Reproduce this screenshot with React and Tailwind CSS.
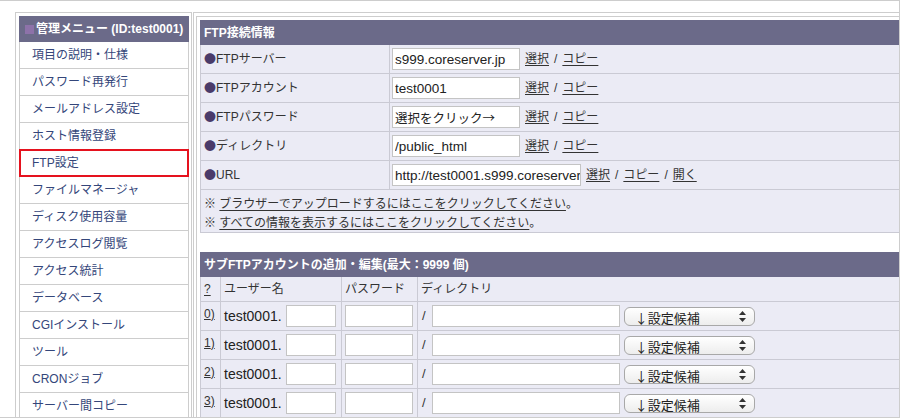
import React from 'react';

const sideItems = [
    '項目の説明・仕様',
    'パスワード再発行',
    'メールアドレス設定',
    'ホスト情報登録',
    'FTP設定',
    'ファイルマネージャ',
    'ディスク使用容量',
    'アクセスログ閲覧',
    'アクセス統計',
    'データベース',
    'CGIインストール',
    'ツール',
    'CRONジョブ',
    'サーバー間コピー',
];

const ftpRows = [
    { label: 'FTPサーバー', value: 's999.coreserver.jp' },
    { label: 'FTPアカウント', value: 'test0001' },
    { label: 'FTPパスワード', value: '選択をクリック→', jp: true },
    { label: 'ディレクトリ', value: '/public_html' },
    { label: 'URL', value: 'http://test0001.s999.coreserver.jp/', url: true },
];

const Field = ({ value, className = '' }) => (
    <input
        readOnly
        defaultValue={value}
        className={`h-[22px] bg-white border border-[#c4c4c4] pl-[2px] text-[#222] outline-none ${className}`}
    />
);

const Sidebar = () => (
    <div className="w-[177px] shrink-0 border border-[#cdcdcd] pt-[3px] pl-[3px] pr-[2px]">
        <div className="w-[170px]">
            {/* header */}
            <div className="h-[26px] bg-[#6b6a89] flex items-center pl-[6px] text-white font-bold text-[12px]">
                <span className="w-[9px] h-[9px] bg-[#8d72a9] mr-[2px]" />
                管理メニュー (ID:test0001)
            </div>
            {sideItems.map((item) => (
                <div
                    key={item}
                    className="relative h-[27px] border-x border-b border-[#cdcdcd] flex items-center pl-[12px] text-[12px] text-[#34467a]"
                >
                    {item}
                    {item === 'FTP設定' && (
                        <div className="absolute -top-[1px] -bottom-[1px] -left-[1px] -right-[1px] border-2 border-[#e5121e]" />
                    )}
                </div>
            ))}
        </div>
    </div>
);

const LinkGroup = ({ open }) => (
    <div className="flex items-center gap-[5px] ml-[5px] text-[12px] text-[#333]">
        <span className="underline underline-offset-2">選択</span>
        <span>/</span>
        <span className="underline underline-offset-2">コピー</span>
        {open && (
            <>
                <span>/</span>
                <span className="underline underline-offset-2">開く</span>
            </>
        )}
    </div>
);

const SelectBox = () => (
    <div className="ml-[4px] w-[131px] h-[19px] rounded-[6px] border border-[#a8a8a8] bg-gradient-to-b from-white to-[#ededed] flex items-center justify-between pl-[10px] pr-[8px] text-[#222]">
        <span className="font-['Noto_Sans_CJK_JP'] text-[13px] leading-none pt-[3px]">↓設定候補</span>
        <svg width="7" height="11" viewBox="0 0 7 11">
            <polygon points="3.5,0 7,4 0,4" fill="#333" />
            <polygon points="0,7 7,7 3.5,11" fill="#333" />
        </svg>
    </div>
);

const Main = () => (
    <div className="w-[730px] shrink-0 border-l border-t border-[#cdcdcd] pl-[2px] pt-[3px]">
        <div className="border-l border-t border-[#cdcdcd] pl-[3px] pt-[3px]">

            {/* FTP connection info */}
            <div className="w-[700px]">
                <div className="h-[25px] bg-[#6b6a89] flex items-center pl-[4px] text-white font-bold text-[12px]">
                    FTP接続情報
                </div>
                <div className="bg-[#ebebf5] border-l border-[#cacad4]">
                    {ftpRows.map((row) => (
                        <div key={row.label} className="grid grid-cols-[189px_1fr] h-[29px] border-b border-[#cacad4]">
                            <div className="border-r border-[#cacad4] flex items-center pl-[3px] pb-[1px] text-[12px] text-[#333]">
                                <span className="font-['Noto_Sans_CJK_JP'] text-[#4a3b6a]">●</span>
                                {row.label}
                            </div>
                            <div className="flex items-center pl-[2px]">
                                <Field
                                    value={row.value}
                                    className={`${row.url ? 'w-[189px]' : 'w-[128px]'} ${row.jp ? "font-['Noto_Sans_CJK_JP'] text-[12.5px]" : 'text-[13.5px]'}`}
                                />
                                <LinkGroup open={row.url} />
                            </div>
                        </div>
                    ))}
                    <div className="h-[43px] border-b border-[#cacad4] pt-[4px] pl-[3px] text-[12px] leading-[18px] text-[#333]">
                        <div>
                            <span className="font-['Noto_Sans_CJK_JP']">※</span>{' '}
                            <span className="underline underline-offset-2">ブラウザーでアップロードするにはここをクリックしてください</span>。
                        </div>
                        <div>
                            <span className="font-['Noto_Sans_CJK_JP']">※</span>{' '}
                            <span className="underline underline-offset-2">すべての情報を表示するにはここをクリックしてください</span>。
                        </div>
                    </div>
                </div>
            </div>

            {/* Sub FTP accounts */}
            <div className="w-[700px] mt-[19px]">
                <div className="h-[25px] bg-[#6b6a89] flex items-center pl-[4px] text-white font-bold text-[12px]">
                    サブFTPアカウントの追加・編集(最大：9999 個)
                </div>
                <div className="bg-[#ebebf5] border-l border-[#cacad4] text-[12px] text-[#333]">
                    <div className="grid grid-cols-[20px_121px_76px_1fr] h-[25px] border-b border-[#cacad4]">
                        <div className="border-r border-[#cacad4] flex items-center pl-[3px] underline underline-offset-2">?</div>
                        <div className="border-r border-[#cacad4] flex items-center pl-[3px]">ユーザー名</div>
                        <div className="border-r border-[#cacad4] flex items-center pl-[3px]">パスワード</div>
                        <div className="flex items-center pl-[3px]">ディレクトリ</div>
                    </div>
                    {[0, 1, 2, 3].map((n) => (
                        <div key={n} className="grid grid-cols-[20px_121px_76px_1fr] h-[29px] border-b border-[#cacad4]">
                            <div className="border-r border-[#cacad4] pl-[3px] pt-[3px] text-[12px] underline underline-offset-1">
                                {n})
                            </div>
                            <div className="border-r border-[#cacad4] flex items-center pl-[3px]">
                                <span className="text-[14px] text-[#222] mr-[4px]">test0001.</span>
                                <Field className="w-[50px]" />
                            </div>
                            <div className="border-r border-[#cacad4] flex items-center pl-[3px]">
                                <Field className="w-[68px]" />
                            </div>
                            <div className="flex items-center pl-[4px]">
                                <span className="text-[13px] mr-[6px]">/</span>
                                <Field className="w-[188px]" />
                                <SelectBox />
                            </div>
                        </div>
                    ))}
                </div>
            </div>
        </div>
    </div>
);

export default function App() {
    return (
        <div className="w-[900px] h-[418px] overflow-hidden bg-white border-t border-r border-b border-[#cdcdcd] font-['Liberation_Sans','Noto_Sans_CJK_JP',sans-serif]">
            <div className="flex items-start pt-[11px] pl-[15px] gap-[1px]">
                <Sidebar />
                <Main />
            </div>
        </div>
    );
}
